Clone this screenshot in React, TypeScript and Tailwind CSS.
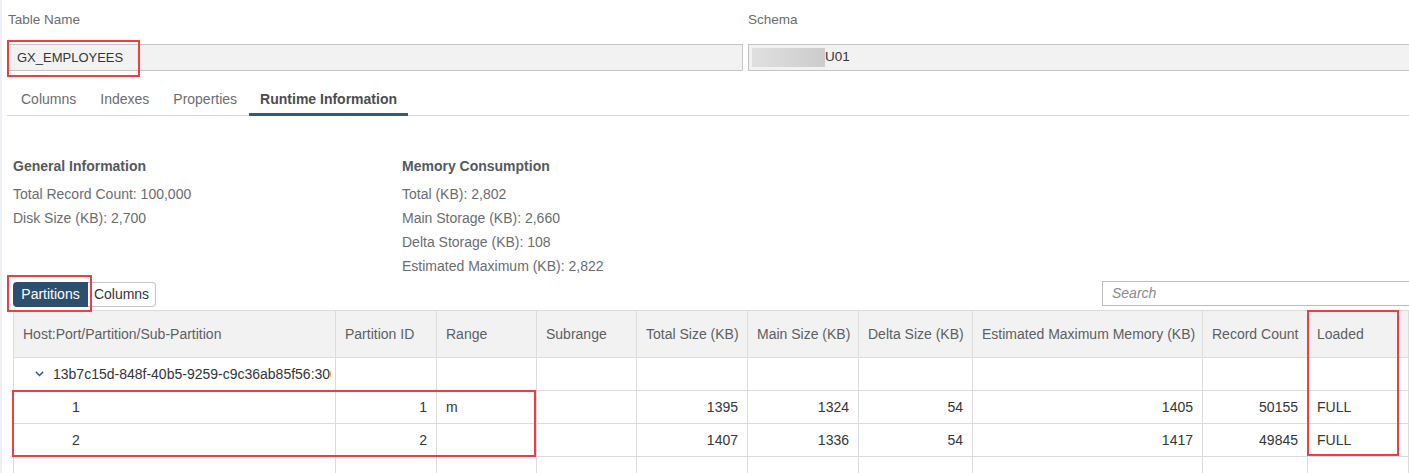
import { ReactNode } from "react";

const font = { fontFamily: '"Liberation Sans", Arial, sans-serif' };

const colWidths = [
  "w-[322px]",
  "w-[101px]",
  "w-[100px]",
  "w-[100px]",
  "w-[111px]",
  "w-[111px]",
  "w-[114px]",
  "w-[230px]",
  "w-[105px]",
  "w-[101px]"
];

const headers = [
  "Host:Port/Partition/Sub-Partition",
  "Partition ID",
  "Range",
  "Subrange",
  "Total Size (KB)",
  "Main Size (KB)",
  "Delta Size (KB)",
  "Estimated Maximum Memory (KB)",
  "Record Count",
  "Loaded"
];

type Row = string[];

const partitionRows: Row[] = [
  ["1", "1", "m", "", "1395", "1324", "54", "1405", "50155", "FULL"],
  ["2", "2", "", "", "1407", "1336", "54", "1417", "49845", "FULL"]
];

// columns whose values sit on the right edge of the cell
const rightAligned = [false, true, false, false, true, true, true, true, true, false];

function Cell({ index, className = "", children }: { index: number; className?: string; children?: ReactNode }) {
  return (
    <div
      className={`${colWidths[index]} flex h-full shrink-0 items-center overflow-hidden whitespace-nowrap border-r border-b border-[#dcdcdc] ${className}`}
    >
      {children}
    </div>
  );
}

function RedBox({ className }: { className: string }) {
  return <div className={`pointer-events-none absolute border-2 border-[#ee3e44] ${className}`} />;
}

function PartitionTable() {
  return (
    <div className="ml-[11px] mt-[3px] flex flex-col border-t border-l border-[#dcdcdc]">
      <div className="flex h-[47px] bg-[#f2f2f2] text-[14px] text-[#5c5f62]">
        {headers.map((label, i) => (
          <Cell key={label} index={i} className="pl-[9px]">
            {label}
          </Cell>
        ))}
      </div>

      <div className="flex h-[33px] text-[14px] text-[#32363a]">
        <Cell index={0} className="pl-[21px] pr-[4px]">
          <svg width="9" height="6" viewBox="0 0 9 6" className="shrink-0">
            <path d="M0.8 0.8 L4.5 4.6 L8.2 0.8" fill="none" stroke="#34536f" strokeWidth="1.4" />
          </svg>
          <span className="ml-[9px] overflow-hidden">13b7c15d-848f-40b5-9259-c9c36ab85f56:30040</span>
        </Cell>
        {headers.slice(1).map((h, i) => (
          <Cell key={h} index={i + 1} />
        ))}
      </div>

      {partitionRows.map((row, r) => (
        <div key={r} className="flex h-[33px] text-[14px] text-[#32363a]">
          {row.map((value, i) => (
            <Cell
              key={i}
              index={i}
              className={i === 0 ? "pl-[58px]" : rightAligned[i] ? "justify-end pr-[9px]" : "pl-[9px]"}
            >
              {value}
            </Cell>
          ))}
        </div>
      ))}

      <div className="flex h-[33px]">
        {headers.map((h, i) => (
          <Cell key={h} index={i} />
        ))}
      </div>
    </div>
  );
}

export default function App() {
  return (
    <div className="relative flex h-[473px] w-full overflow-hidden bg-white" style={font}>
      <div className="w-[2px] shrink-0 bg-[#edf1f6]" />

      <div className="flex min-w-0 flex-1 flex-col">
        {/* name + schema */}
        <div className="grid grid-cols-[735px_1fr] gap-x-[5px] pl-[6px]">
          <div className="flex h-[40px] items-center text-[13.5px] text-[#6a6d70]">Table Name</div>
          <div className="flex h-[40px] items-center text-[13.5px] text-[#6a6d70]">Schema</div>
          <div className="mt-[4px] flex h-[27px] items-center border border-[#c4c4c4] bg-[#f2f2f2] pl-[8px] text-[13px] text-[#32363a]">
            GX_EMPLOYEES
          </div>
          <div className="mt-[4px] flex h-[27px] items-center border border-r-0 border-[#c4c4c4] bg-[#f2f2f2] pl-[3px] text-[13.5px] text-[#32363a]">
            <span className="h-[19px] w-[73px] bg-gradient-to-r from-[#e0e0e0] to-[#cccccc]" />
            <span>U01</span>
          </div>
        </div>

        {/* tabs */}
        <div className="ml-[5px] mt-[13px] flex h-[32px] border-b border-[#d9d9d9] pl-[2px] text-[14px]">
          {["Columns", "Indexes", "Properties"].map((tab) => (
            <div key={tab} className="-mb-px flex h-[32px] items-center px-[12px] pt-[1px] pb-[2px] text-[#6a6d70]">
              {tab}
            </div>
          ))}
          <div className="-mb-px flex h-[32px] items-center border-b-[3px] border-[#2f5b83] px-[11px] pt-[1px] font-bold text-[#4a4d50]">
            Runtime Information
          </div>
        </div>

        {/* runtime info */}
        <div className="mt-[38px] grid grid-cols-[389px_1fr] pl-[11px] text-[14px] text-[#6a6d70]">
          <div className="flex flex-col">
            <div className="h-[24px] leading-[24px] font-bold text-[#555a5e]">General Information</div>
            <div className="mt-[4px] h-[24px] leading-[24px]">Total Record Count: 100,000</div>
            <div className="h-[24px] leading-[24px]">Disk Size (KB): 2,700</div>
          </div>
          <div className="flex flex-col">
            <div className="h-[24px] leading-[24px] font-bold text-[#555a5e]">Memory Consumption</div>
            <div className="mt-[4px] h-[24px] leading-[24px]">Total (KB): 2,802</div>
            <div className="h-[24px] leading-[24px]">Main Storage (KB): 2,660</div>
            <div className="h-[24px] leading-[24px]">Delta Storage (KB): 108</div>
            <div className="h-[24px] leading-[24px]">Estimated Maximum (KB): 2,822</div>
          </div>
        </div>

        {/* toolbar */}
        <div className="mt-[4px] flex h-[25px] items-center pl-[11px]">
          <button className="flex h-[25px] w-[75px] items-center justify-center rounded-l-[4px] bg-[#2d4f6d] text-[14px] text-white">
            Partitions
          </button>
          <button className="flex h-[25px] w-[68px] items-center justify-center rounded-r-[4px] border border-l-0 border-[#c6c6c6] bg-white text-[14px] text-[#32363a]">
            Columns
          </button>
          <div className="ml-auto -mt-[2px] flex h-[25px] w-[307px] items-center border border-r-0 border-[#bdbdbd] pl-[9px] text-[14px] italic text-[#8a8c8e]">
            Search
          </div>
        </div>

        <PartitionTable />
      </div>

      <RedBox className="left-[7px] top-[40px] h-[37px] w-[133px]" />
      <RedBox className="left-[7px] top-[275px] h-[37px] w-[85px]" />
      <RedBox className="left-[12px] top-[390px] h-[67px] w-[524px]" />
      <RedBox className="left-[1307px] top-[310px] h-[146px] w-[92px]" />
    </div>
  );
}
